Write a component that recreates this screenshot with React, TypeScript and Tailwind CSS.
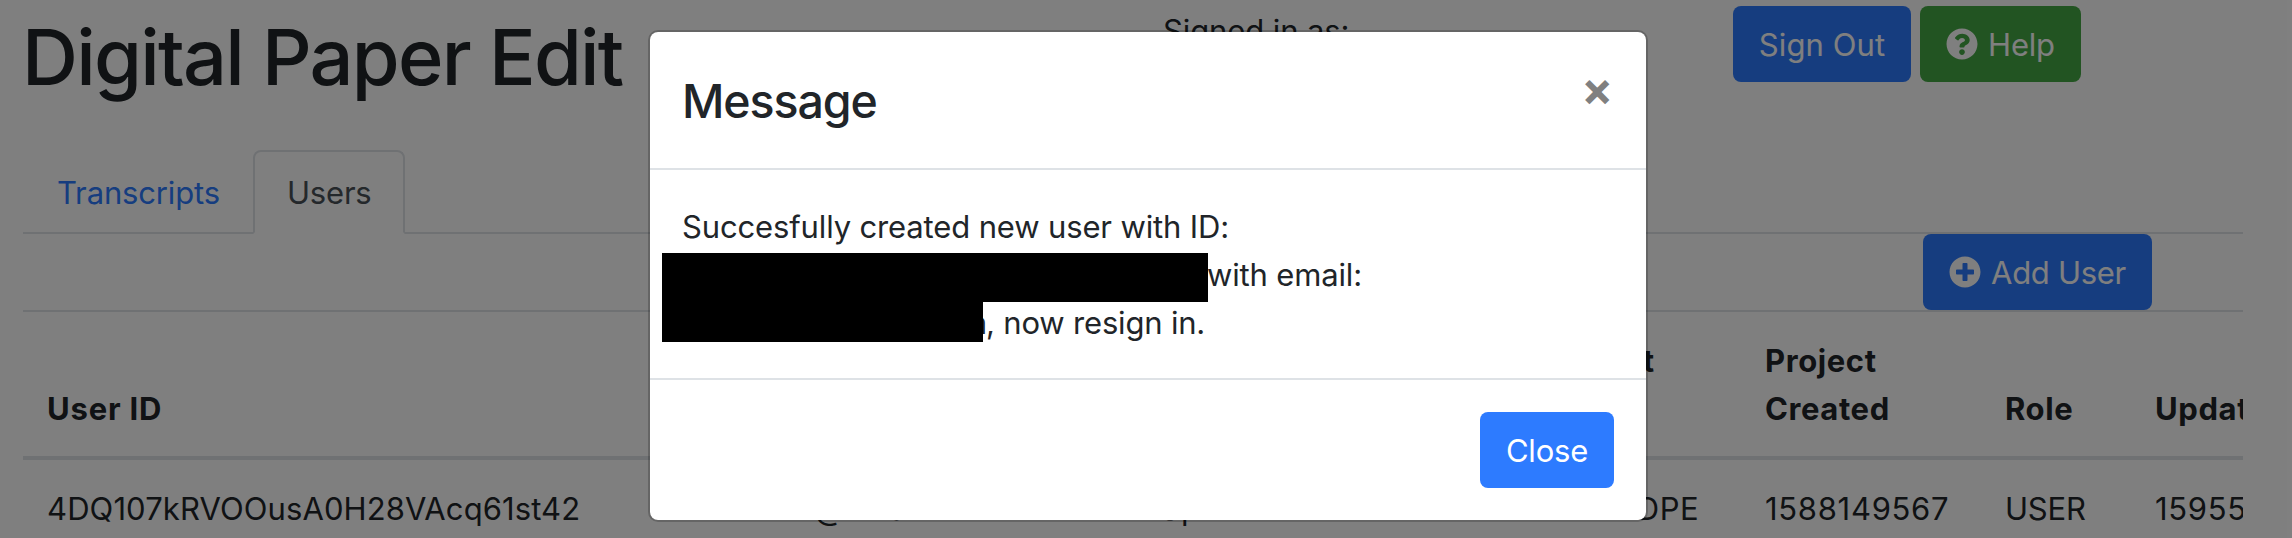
import { FaQuestionCircle, FaPlusCircle } from "react-icons/fa";

function Header() {
  return (
    <header className="flex h-[150px] items-start">
      <h1 className="mt-[9px] -ml-px w-[1141px] whitespace-nowrap text-[77.5px] leading-[96px] font-medium tracking-[-1.75px]">
        Digital Paper Edit
      </h1>
      <p className="mt-[7px] w-[570px] tracking-[-0.1px]">Signed in as:</p>
      <div className="mt-[6px] flex gap-[9px]">
        <button className="h-[76px] w-[178px] rounded-[8px] bg-[#2d7bff] pt-[2px] tracking-[0.1px] text-white">Sign Out</button>
        <button className="flex h-[76px] w-[161px] items-center justify-center gap-[10px] rounded-[8px] bg-[#44a844] text-white">
          <FaQuestionCircle className="size-[32px]" />
          <span className="pt-[2px]">Help</span>
        </button>
      </div>
    </header>
  );
}

function Tabs() {
  return (
    <nav className="flex h-[84px] border-b-2 border-[#dee2e6]">
      <a className="w-[230px] px-[34px] pt-[19px] tracking-[-0.15px] text-[#2d7bff]">Transcripts</a>
      <a className="h-[84px] w-[152px] rounded-t-[8px] border-2 border-[#dee2e6] border-b-white bg-white px-[32px] pt-[17px] tracking-[-0.2px] text-[#495057]">
        Users
      </a>
    </nav>
  );
}

const columns = "grid grid-cols-[613px_428px_455px_222px_240px_150px_300px]";

function UsersTable() {
  return (
    <div className="w-[2220px] overflow-hidden border-t-2 border-[#dee2e6] whitespace-nowrap">
      <div className={`${columns} h-[148px] items-end border-b-4 border-[#dee2e6] px-[24px] pb-[23px] font-bold tracking-[0.6px]`}>
        <span className="tracking-[0.8px]">User ID</span>
        <span>Email</span>
        <span>Project ID</span>
        <span>Project<br />Title</span>
        <span>Project<br />Created</span>
        <span>Role</span>
        <span>Updated</span>
      </div>
      <div className={`${columns} h-[78px] px-[24px] pt-[25px]`}>
        <span className="tracking-[0.1px]">4DQ107kRVOOusA0H28VAcq61st42</span>
        <span>demo.user@email.com</span>
        <span className="tracking-[1px]">COCSpGCCC</span>
        <span className="tracking-[0.5px]">News DPE</span>
        <span className="tracking-[0.7px]">1588149567</span>
        <span>USER</span>
        <span className="tracking-[0.7px]">1595512345</span>
      </div>
    </div>
  );
}

function MessageDialog() {
  return (
    <div className="absolute top-[30px] left-[648px] w-[1000px] rounded-[10px] border-2 border-black/20 bg-white bg-clip-padding">
      <div className="flex h-[138px] justify-between border-b-2 border-[#dee2e6] p-[32px]">
        <h2 className="pt-px text-[46.5px] leading-[72px] font-medium tracking-[-1.1px]">Message</h2>
        <button className="-mt-[4px] mr-[1px] h-[58px] w-[32px] text-[47px] leading-[58px] font-bold text-[#808080]">×</button>
      </div>
      <div className="h-[208px] pt-[32px] pl-[12px] tracking-[-0.14px]">
        <p className="pt-px pl-[20px]">Succesfully created new user with ID:</p>
        <p className="flex h-[48px]">
          <span className="mt-[2px] h-[49px] w-[546px] shrink-0 bg-black" />
          <span className="-ml-px tracking-[-0.15px]">with email:</span>
        </p>
        <p className="flex h-[48px]">
          <span className="z-10 -mt-px h-[44px] w-[321px] shrink-0 bg-black" />
          <span className="-ml-[23px]">m</span>
          <span className="-ml-px tracking-[-0.18px]">, now resign in.</span>
        </p>
      </div>
      <div className="flex h-[142px] justify-end border-t-2 border-[#dee2e6] p-[32px]">
        <button className="h-[76px] w-[134px] rounded-[8px] bg-[#2d7bff] pt-[2px] text-white">Close</button>
      </div>
    </div>
  );
}

export default function App() {
  return (
    <div className="relative h-[538px] overflow-hidden bg-white font-['Inter',sans-serif] text-[31px] leading-[48px] tracking-[-0.2px] text-[#212529]">
      <main className="w-[2243px] pl-[23px]">
        <Header />
        <Tabs />
        <div className="flex h-[76px] justify-end pr-[91px]">
          <button className="flex h-[76px] w-[229px] items-center justify-center gap-[10px] rounded-[8px] bg-[#2d7bff] text-white">
            <FaPlusCircle className="size-[32px]" />
            <span className="pt-[2px] tracking-[-0.3px]">Add User</span>
          </button>
        </div>
        <UsersTable />
      </main>
      <div className="absolute inset-0 bg-black/50" />
      <MessageDialog />
    </div>
  );
}
